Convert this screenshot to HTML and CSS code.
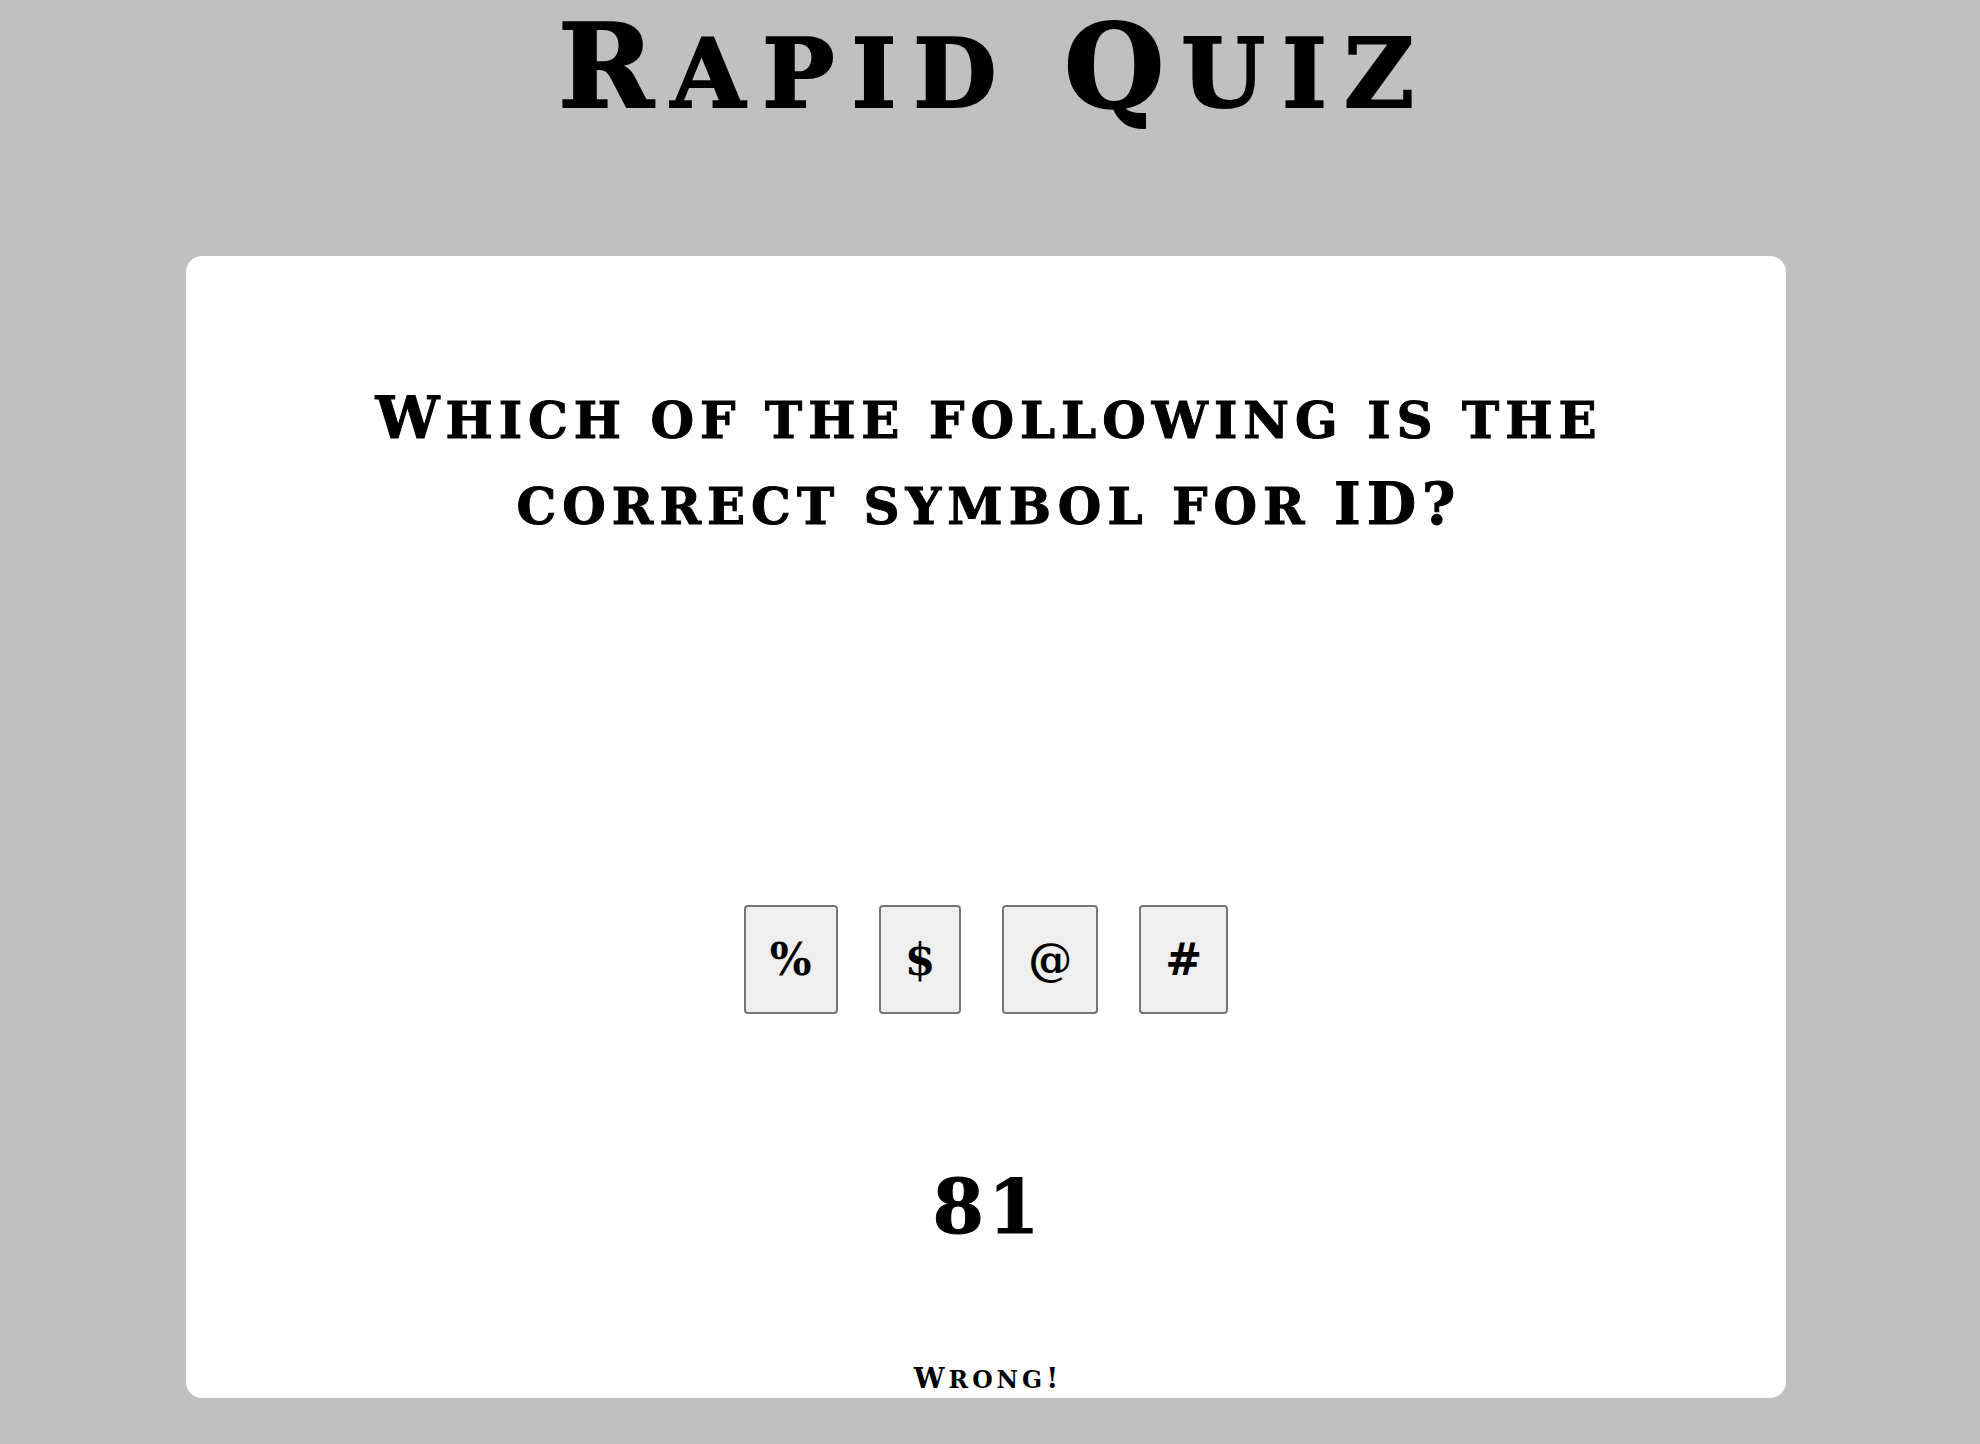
FILE: index.html
```html
<!DOCTYPE html>
<html lang="en">
<head>
<meta charset="utf-8">
<title>Rapid Quiz</title>
<link rel="stylesheet" href="styles.css">
</head>
<body>
<h1 class="title"><span class="cap">R</span>apid <span class="cap">Q</span>uiz</h1>
<main class="card">
  <h2 class="question"><span class="cap">W</span>hich of the following is the correct symbol for <span class="cap">ID?</span></h2>
  <div class="options">
    <button class="option">%</button>
    <button class="option">$</button>
    <button class="option">@</button>
    <button class="option">#</button>
  </div>
  <div class="timer">81</div>
  <p class="result"><span class="cap">W</span>rong<span class="cap">!</span></p>
</main>
</body>
</html>
```

FILE: styles.css
```css
html, body {
  background: #c0c0c0;
}
body {
  margin: 0 8px 0 0;
  font-family: "DejaVu Serif", "Liberation Serif", serif;
  font-weight: bold;
  color: #000;
}
.title {
  margin: 7px 0 0;
  padding-left: 17px;
  font-size: 96px;
  line-height: 120px;
  text-align: center;
  text-transform: uppercase;
  letter-spacing: 17px;
  -webkit-text-stroke: 2px #000;
}
.title .cap {
  font-size: 1.2em;
}
.card {
  width: 1600px;
  margin: 122px auto 0;
  background: #fff;
  border-radius: 16px;
  padding: 120px 0 3px;
  box-sizing: border-box;
  display: flex;
  flex-direction: column;
  align-items: center;
}
.question {
  margin: 0;
  max-width: 1320px;
  padding-left: 6px;
  font-size: 50px;
  line-height: 83px;
  text-align: center;
  text-transform: uppercase;
  letter-spacing: 6px;
  -webkit-text-stroke: 1px #000;
}
.question .cap {
  font-size: 1.14em;
}
.options {
  margin-top: 357px;
  display: flex;
  gap: 41px;
}
.option {
  font-family: inherit;
  font-weight: bold;
  font-size: 44px;
  line-height: 55px;
  padding: 25px 24px;
  background: #efefef;
  border: 2px solid #767676;
  border-radius: 4px;
  color: #000;
}
.timer {
  margin-top: 153px;
  padding-left: 4px;
  font-size: 74px;
  line-height: 80px;
  letter-spacing: 4px;
  -webkit-text-stroke: 1px #000;
}
.result {
  margin: 116px 0 0;
  padding-left: 4px;
  font-size: 23.5px;
  line-height: 30px;
  text-transform: uppercase;
  letter-spacing: 4px;
}
.result .cap {
  font-size: 1.17em;
}
```
